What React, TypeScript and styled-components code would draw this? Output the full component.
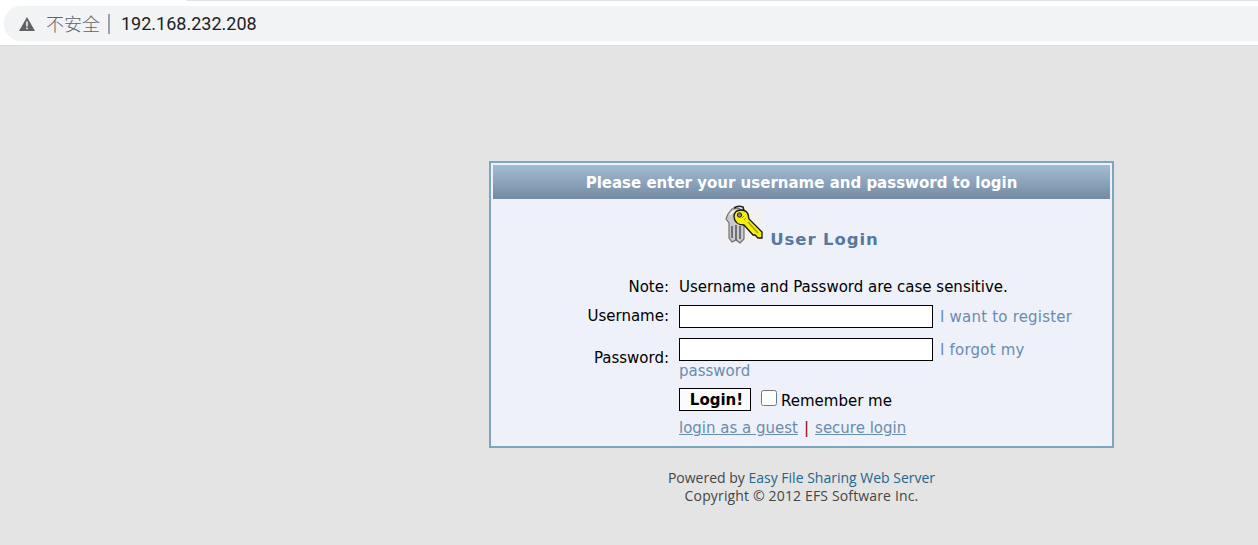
import React from "react";
import styled, { createGlobalStyle } from "styled-components";

const GlobalStyle = createGlobalStyle`
  html, body {
    margin: 0;
    padding: 0;
    height: 100%;
    overflow: hidden;
    background: #e4e4e4;
  }
`;

const KeyIcon = () => (
  <svg width="40" height="40" viewBox="0 0 40 40">
    <rect width="40" height="40" fill="#f0f1f0" />
    {/* grey keys behind */}
    <path
      d="M4 9 L8 4 L14 3 L18 5 L20 18 L20 34 L16 38 L12 35 L8 37 L5 33 L5 18 L2 14 Z"
      fill="#c8c8ce"
      stroke="#6a6a70"
      strokeWidth="1.1"
    />
    <path d="M8 21 V33 M12 20 V35 M16 21 V34" stroke="#5c5c62" strokeWidth="1.6" />
    <path d="M6 10 Q8 6 12 6" fill="none" stroke="#f4f4f6" strokeWidth="1.6" />
    <path d="M10 3 Q14 0 19 2 L20 6" fill="none" stroke="#222" strokeWidth="1.6" />
    {/* yellow key */}
    <path
      d="M10 12 Q10 5 17 5 Q24 5 24.5 12 L25 14 L38 27 L38 33 L34 33 L31 30 L29 30 L20 20 Q11 20 10 12 Z"
      fill="#f7ee0c"
      stroke="#17170c"
      strokeWidth="1.3"
    />
    <circle cx="15.5" cy="10" r="2.2" fill="#7f8490" stroke="#222" strokeWidth="1" />
    <path d="M18 13 L20 11 M20 15 L22 13" stroke="#8c8610" strokeWidth="1" />
    <path d="M24 17 L34 28" stroke="#a09a10" strokeWidth="1.2" />
  </svg>
);

const WarningIcon = () => (
  <svg width="16" height="14" viewBox="0 0 16 14">
    <path d="M8 0 L16 14 H0 Z" fill="#5f6368" />
    <rect x="7.2" y="4.5" width="1.6" height="5" fill="#f1f3f4" />
    <rect x="7.2" y="10.6" width="1.6" height="1.6" fill="#f1f3f4" />
  </svg>
);

export default function App() {
  return (
    <Page>
      <GlobalStyle />
      <BrowserBar>
        <TabEdge />
        <AddressPill>
          <WarningSlot>
            <WarningIcon />
          </WarningSlot>
          <SecurityText>不安全</SecurityText>
          <Divider />
          <UrlText>192.168.232.208</UrlText>
        </AddressPill>
      </BrowserBar>
      <Content>
        <LoginPanel>
          <PanelHeader>Please enter your username and password to login</PanelHeader>
          <PanelBody>
            <TitleRow>
              <KeyIcon />
              <TitleText>User Login</TitleText>
            </TitleRow>
            <FormGrid>
              <NoteLabel>Note:</NoteLabel>
              <NoteValue>Username and Password are case sensitive.</NoteValue>
              <FieldLabel>Username:</FieldLabel>
              <FieldValue>
                <TextField type="text" />
                <SideLink>I want to register</SideLink>
              </FieldValue>
              <PasswordLabel>Password:</PasswordLabel>
              <PasswordValue>
                <TextField type="password" />
                <SideLink>I forgot my</SideLink>
                <WrappedLink>password</WrappedLink>
              </PasswordValue>
              <EmptyCell />
              <ActionValue>
                <LoginButton type="button">Login!</LoginButton>
                <RememberBox type="checkbox" />
                <RememberText>Remember me</RememberText>
              </ActionValue>
              <EmptyCell />
              <LinksValue>
                <UnderLink>login as a guest</UnderLink>
                <Separator>|</Separator>
                <UnderLink>secure login</UnderLink>
              </LinksValue>
            </FormGrid>
          </PanelBody>
        </LoginPanel>
        <Footer>
          <div>
            Powered by <FooterLink>Easy File Sharing Web Server</FooterLink>
          </div>
          <CopyrightLine>Copyright © 2012 EFS Software Inc.</CopyrightLine>
        </Footer>
      </Content>
    </Page>
  );
}

const Page = styled.div`
  width: 1258px;
  height: 545px;
  background: #e4e4e4;
  display: flex;
  flex-direction: column;
`;

const BrowserBar = styled.header`
  height: 46px;
  box-sizing: border-box;
  padding-left: 4px;
  background: #ffffff;
  border-bottom: 1px solid #dadce0;
  flex-shrink: 0;
`;

const TabEdge = styled.div`
  height: 1px;
  margin: 0 0 5px 182px;
  background: #dee1e6;
`;

const AddressPill = styled.div`
  height: 35px;
  border-radius: 17px 0 0 17px;
  background: #f1f3f4;
  display: flex;
  align-items: center;
  font-family: "Noto Sans CJK SC", "Noto Sans", sans-serif;
`;

const WarningSlot = styled.span`
  display: flex;
  margin-left: 15px;
`;

const SecurityText = styled.span`
  margin: -2px 0 0 11px;
  font-size: 18px;
  font-weight: 300;
  color: #5f6368;
`;

const Divider = styled.span`
  width: 2px;
  height: 20px;
  margin-left: 8px;
  background: #9aa0a6;
`;

const UrlText = styled.span`
  margin-left: 11px;
  font-family: "Roboto", "Noto Sans", sans-serif;
  font-size: 18px;
  color: #202124;
`;

const Content = styled.main`
  padding: 115px 0 0 489px;
`;

const LoginPanel = styled.section`
  width: 625px;
  height: 287px;
  box-sizing: border-box;
  border: 2px solid #7ca6bd;
  padding: 2px;
  background: #eef1f9;
  font-family: "DejaVu Sans", Verdana, sans-serif;
  font-size: 15px;
  color: #000000;
`;

const PanelHeader = styled.h1`
  margin: 0;
  height: 34px;
  line-height: 36px;
  text-align: center;
  font-size: 15px;
  font-weight: 700;
  color: #ffffff;
  background: linear-gradient(#a3bcd3, #748aa3);
`;

const PanelBody = styled.div`
  display: flex;
  flex-direction: column;
  align-items: center;
`;

const TitleRow = styled.div`
  display: flex;
  align-items: flex-end;
  gap: 6px;
  margin-top: 6px;
  height: 40px;
`;

const TitleText = styled.span`
  font-size: 16.5px;
  font-weight: 700;
  letter-spacing: 0.9px;
  line-height: 17px;
  color: #55799f;
  margin-bottom: -3px;
`;

const FormGrid = styled.div`
  align-self: stretch;
  display: grid;
  grid-template-columns: 176px 1fr;
  column-gap: 10px;
  margin-top: 33px;
  line-height: 18px;
`;

const NoteLabel = styled.div`
  text-align: right;
  height: 27px;
`;

const NoteValue = styled.div`
  white-space: nowrap;
`;

const FieldLabel = styled.div`
  text-align: right;
  height: 33px;
  padding-top: 2px;
  box-sizing: border-box;
`;

const FieldValue = styled.div`
  display: flex;
  align-items: flex-start;
  flex-wrap: wrap;
  white-space: nowrap;
`;

const PasswordLabel = styled.div`
  text-align: right;
  height: 50px;
  padding-top: 11px;
  box-sizing: border-box;
`;

const PasswordValue = styled(FieldValue)`
  width: 400px;
  align-content: flex-start;
`;

const TextField = styled.input`
  width: 254px;
  height: 23px;
  box-sizing: border-box;
  margin: 0;
  padding: 1px 2px;
  border: 1px solid #000000;
  border-radius: 0;
  background: #ffffff;
  outline: none;
`;

const SideLink = styled.span`
  margin: 3px 0 0 7px;
  letter-spacing: 0.2px;
  color: #6a8caf;
`;

const WrappedLink = styled.span`
  flex-basis: 100%;
  margin-top: 1px;
  color: #6a8caf;
`;

const EmptyCell = styled.div``;

const ActionValue = styled.div`
  display: flex;
  align-items: flex-start;
  height: 30px;
`;

const LoginButton = styled.button`
  width: 72px;
  height: 23px;
  box-sizing: border-box;
  margin: 0;
  padding: 0 0 0 3px;
  border: 1px solid #000000;
  background: #fbfbfb;
  font-family: inherit;
  font-size: 15px;
  font-weight: 700;
  color: #000000;
`;

const RememberBox = styled.input`
  width: 16px;
  height: 16px;
  margin: 2px 0 0 10px;
`;

const RememberText = styled.span`
  margin: 4px 0 0 4px;
`;

const LinksValue = styled.div`
  display: flex;
  white-space: pre;
  padding-top: 1px;
`;

const UnderLink = styled.span`
  color: #6a8caf;
  text-decoration: underline;
`;

const Separator = styled.span`
  margin: 0 6px;
  color: #800000;
`;

const Footer = styled.footer`
  width: 625px;
  margin-top: 21px;
  text-align: center;
  font-family: "Open Sans", "Noto Sans", sans-serif;
  font-size: 14px;
  line-height: 18px;
  color: #444444;
`;

const CopyrightLine = styled.div`
  letter-spacing: 0.15px;
`;

const FooterLink = styled.span`
  color: #22668f;
`;
